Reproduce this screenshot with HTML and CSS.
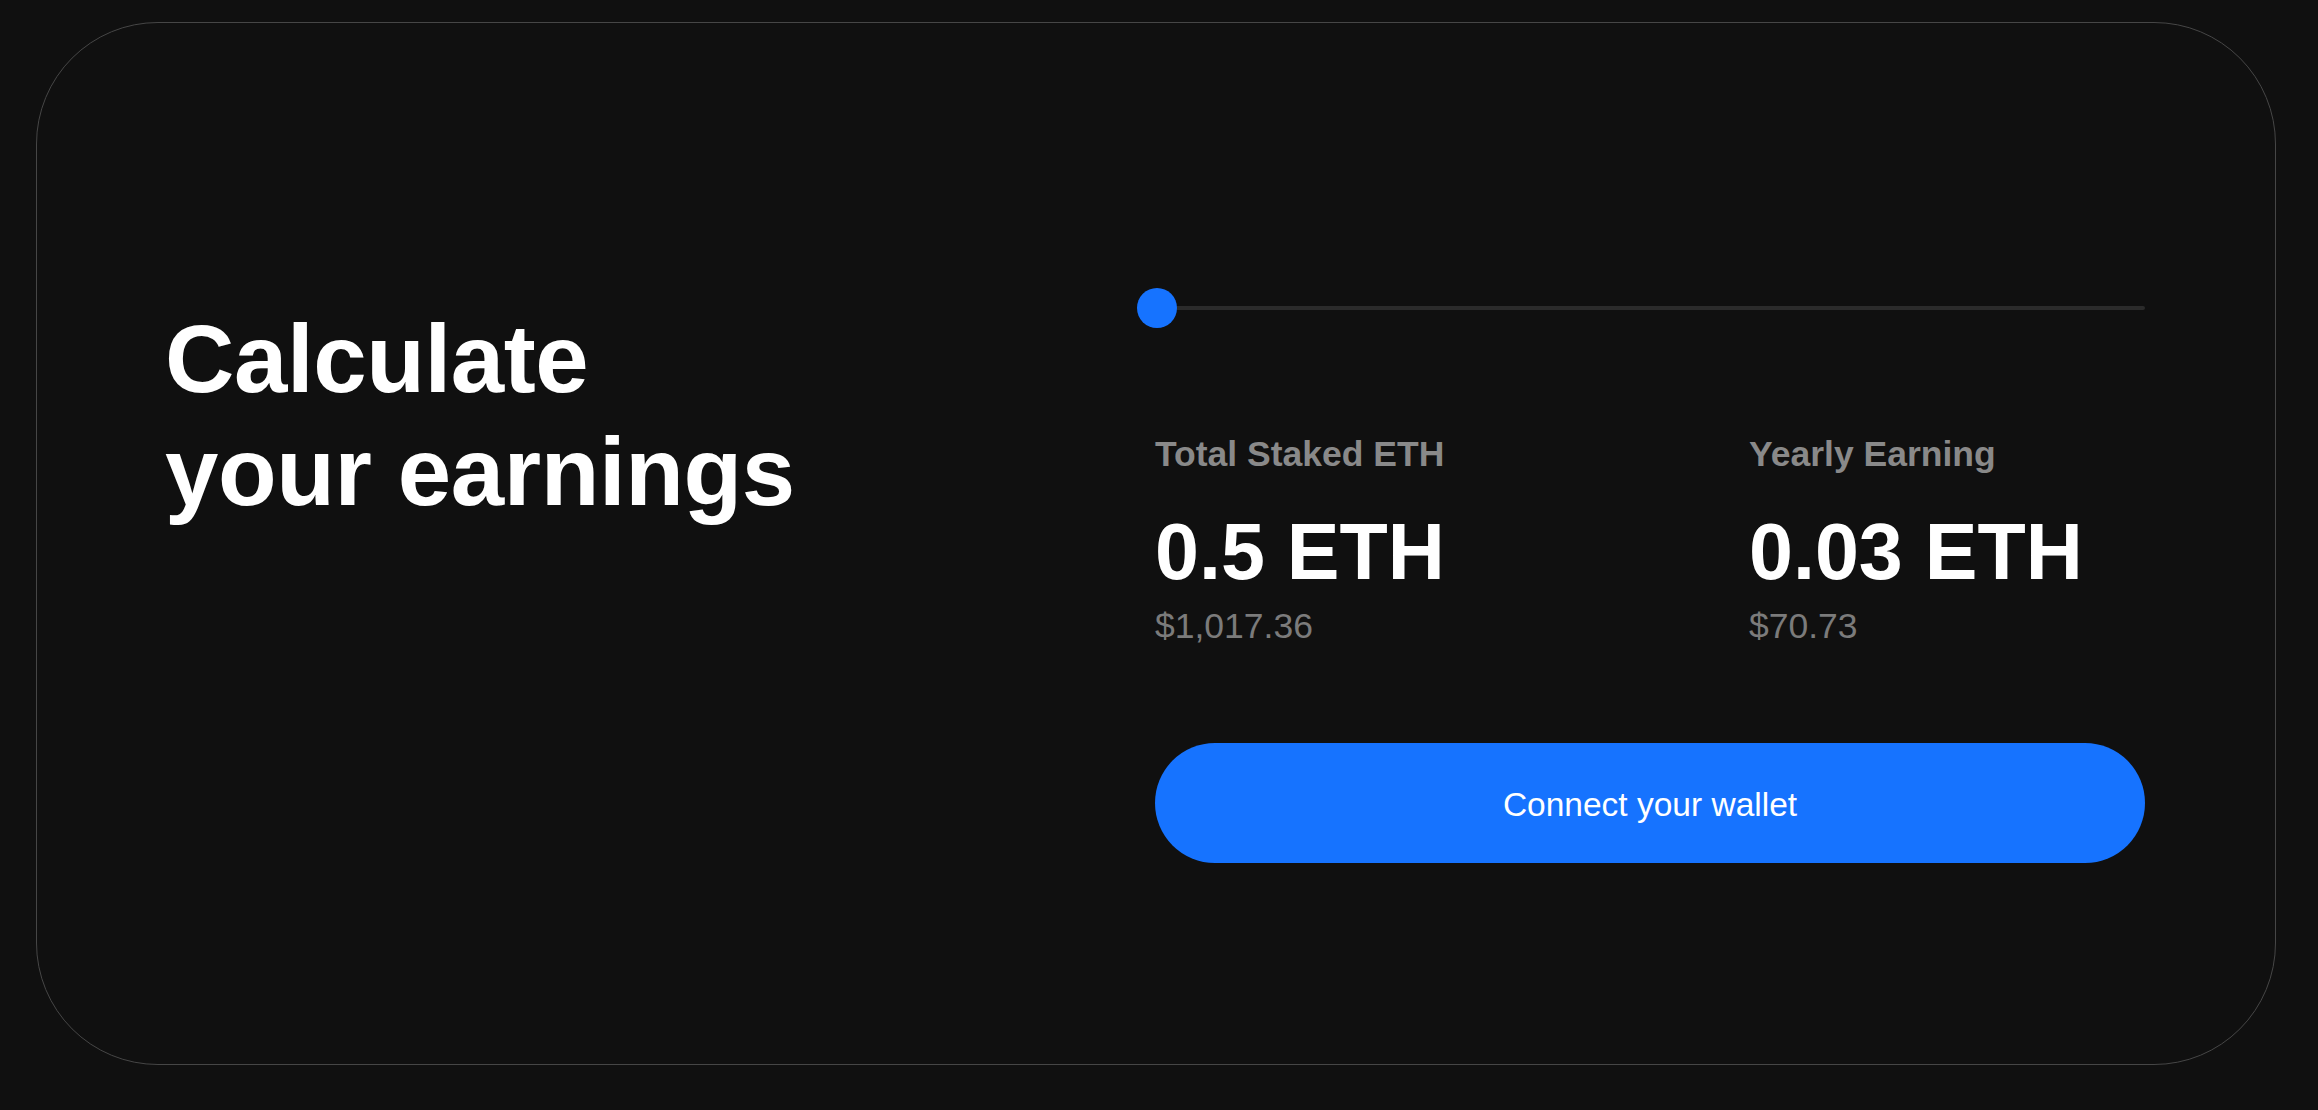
FILE: index.html
```html
<!DOCTYPE html>
<html lang="en">
<head>
<meta charset="utf-8">
<title>Calculate your earnings</title>
<link rel="stylesheet" href="styles.css">
</head>
<body>
<section class="card">
  <h1 class="title">Calculate<br>your earnings</h1>
  <div class="calc">
    <div class="slider">
      <div class="track"></div>
      <div class="knob"></div>
    </div>
    <div class="stats">
      <div class="stat">
        <div class="label">Total Staked ETH</div>
        <div class="value">0.5 ETH</div>
        <div class="usd">$1,017.36</div>
      </div>
      <div class="stat">
        <div class="label">Yearly Earning</div>
        <div class="value">0.03 ETH</div>
        <div class="usd">$70.73</div>
      </div>
    </div>
    <button class="connect" type="button">Connect your wallet</button>
  </div>
</section>
</body>
</html>
```
FILE: styles.css
```css
html, body {
  margin: 0;
  background: #101010;
}
body {
  padding: 22px 42px 0 36px;
  font-family: "Liberation Sans", Arial, Helvetica, sans-serif;
  color: #fff;
}
.card {
  box-sizing: border-box;
  height: 1043px;
  border: 1.5px solid #464646;
  border-radius: 122px;
  display: flex;
  align-items: flex-start;
  padding: 265px 130px 0 128px;
}
.title {
  flex: 1;
  margin: 14px 0 0 0;
  font-size: 96px;
  line-height: 113px;
  font-weight: 700;
  letter-spacing: -0.4px;
}
.calc {
  width: 990px;
  display: flex;
  flex-direction: column;
}
.slider {
  position: relative;
  height: 40px;
  display: flex;
  align-items: center;
}
.track {
  flex: 1;
  height: 4px;
  border-radius: 2px;
  background: #2b2b2b;
}
.knob {
  position: absolute;
  left: -18px;
  top: 0;
  width: 40px;
  height: 40px;
  border-radius: 50%;
  background: #1673ff;
}
.stats {
  display: grid;
  grid-template-columns: 60% 40%;
  margin-top: 106px;
}
.label {
  font-size: 35.5px;
  line-height: 40px;
  font-weight: 700;
  color: #898989;
}
.value {
  margin-top: 38px;
  font-size: 79px;
  line-height: 79px;
  font-weight: 700;
  color: #fff;
}
.usd {
  margin-top: 15px;
  font-size: 35.5px;
  line-height: 40px;
  color: #7b7b7b;
}
.connect {
  margin-top: 97px;
  height: 120px;
  border: 0;
  border-radius: 60px;
  background: #1673ff;
  color: #fff;
  font-family: "Liberation Sans", Arial, Helvetica, sans-serif;
  font-size: 33.5px;
  padding: 4px 0 0 0;
  cursor: pointer;
}
```
